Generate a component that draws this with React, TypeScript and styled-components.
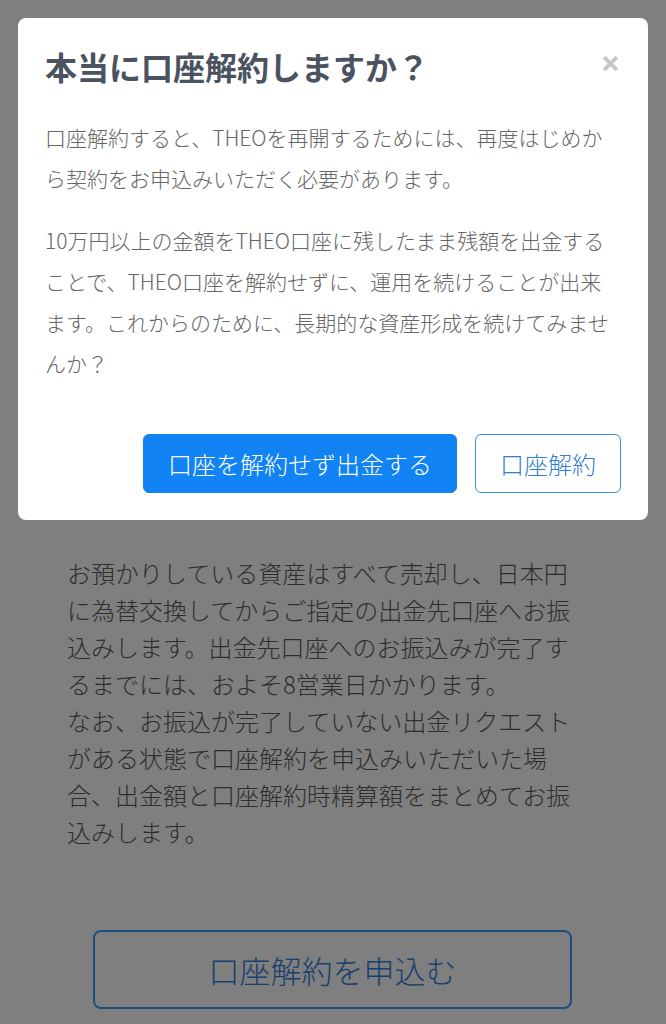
import React from "react";
import styled, { createGlobalStyle } from "styled-components";

const GlobalStyle = createGlobalStyle`
  html, body {
    margin: 0;
    padding: 0;
    background: #ffffff;
  }
  body {
    font-family: "Noto Sans CJK JP", "Noto Sans", sans-serif;
    -webkit-font-smoothing: antialiased;
  }
  * { box-sizing: border-box; }
`;

const Page = styled.main`
  min-height: 1024px;
  padding: 554px 0 0 67px;
`;

const Notice = styled.p`
  margin: 0;
  width: 512px;
  font-size: 24px;
  line-height: 37px;
  font-weight: 300;
  color: #5c5c5c;
`;

const ApplyButton = styled.button`
  display: block;
  margin: 80px 0 0 26px;
  width: 479px;
  height: 79px;
  border: 2px solid #3d9cff;
  border-radius: 8px;
  background: #ffffff;
  color: #3381dc;
  font-family: inherit;
  font-size: 31px;
  font-weight: 300;
  cursor: pointer;
`;

const Overlay = styled.div`
  position: fixed;
  inset: 0;
  background: rgba(0, 0, 0, 0.5);
`;

const Dialog = styled.section`
  position: fixed;
  top: 18px;
  left: 18px;
  width: 630px;
  padding: 27px;
  background: #ffffff;
  border-radius: 8px;
`;

const Header = styled.header`
  display: flex;
  align-items: center;
  justify-content: space-between;
`;

const Title = styled.h2`
  margin: 0;
  font-size: 32px;
  line-height: 43px;
  font-weight: 700;
  color: #4b5361;
`;

const CloseButton = styled.button`
  display: flex;
  align-items: center;
  justify-content: center;
  width: 22px;
  height: 22px;
  margin-top: -6px;
  padding: 0;
  border: 0;
  background: none;
  cursor: pointer;
`;

const Body = styled.div`
  margin-top: 29px;
  display: flex;
  flex-direction: column;
  gap: 21px;
`;

const Text = styled.p`
  margin: 0;
  font-size: 21px;
  line-height: 41px;
  font-weight: 300;
  color: #666666;
`;

const Actions = styled.div`
  margin-top: 50px;
  display: flex;
  justify-content: flex-end;
  gap: 18px;
`;

const ActionButton = styled.button<{ $primary?: boolean }>`
  height: 59px;
  padding: 0 24px;
  border-radius: 6px;
  border: 1px solid ${(p) => (p.$primary ? "#1183f4" : "#3a8de0")};
  background: ${(p) => (p.$primary ? "#1183f4" : "#ffffff")};
  color: ${(p) => (p.$primary ? "#ffffff" : "#2f7fcf")};
  font-family: inherit;
  font-size: 24px;
  font-weight: 300;
  line-height: 1;
  white-space: nowrap;
  cursor: pointer;
`;

function CloseIcon() {
  return (
    <svg width="19" height="19" viewBox="0 0 18 18" aria-hidden="true">
      <path
        d="M3 3 L15 15 M15 3 L3 15"
        stroke="#c6c6c6"
        strokeWidth="3.6"
        strokeLinecap="butt"
        fill="none"
      />
    </svg>
  );
}

export default function App() {
  return (
    <>
      <GlobalStyle />
      <Page>
        <Notice>
          お預かりしている資産はすべて売却し、日本円に為替交換してからご指定の出金先口座へお振込みします。出金先口座へのお振込みが完了するまでには、およそ8営業日かかります。
          <br />
          なお、お振込が完了していない出金リクエストがある状態で口座解約を申込みいただいた場合、出金額と口座解約時精算額をまとめてお振込みします。
        </Notice>
        <ApplyButton type="button">口座解約を申込む</ApplyButton>
      </Page>
      <Overlay />
      <Dialog role="dialog" aria-modal="true">
        <Header>
          <Title>本当に口座解約しますか？</Title>
          <CloseButton type="button" aria-label="閉じる">
            <CloseIcon />
          </CloseButton>
        </Header>
        <Body>
          <Text>
            口座解約すると、THEOを再開するためには、再度はじめから契約をお申込みいただく必要があります。
          </Text>
          <Text>
            10万円以上の金額をTHEO口座に残したまま残額を出金することで、THEO口座を解約せずに、運用を続けることが出来ます。これからのために、長期的な資産形成を続けてみませんか？
          </Text>
        </Body>
        <Actions>
          <ActionButton type="button" $primary>
            口座を解約せず出金する
          </ActionButton>
          <ActionButton type="button">口座解約</ActionButton>
        </Actions>
      </Dialog>
    </>
  );
}
